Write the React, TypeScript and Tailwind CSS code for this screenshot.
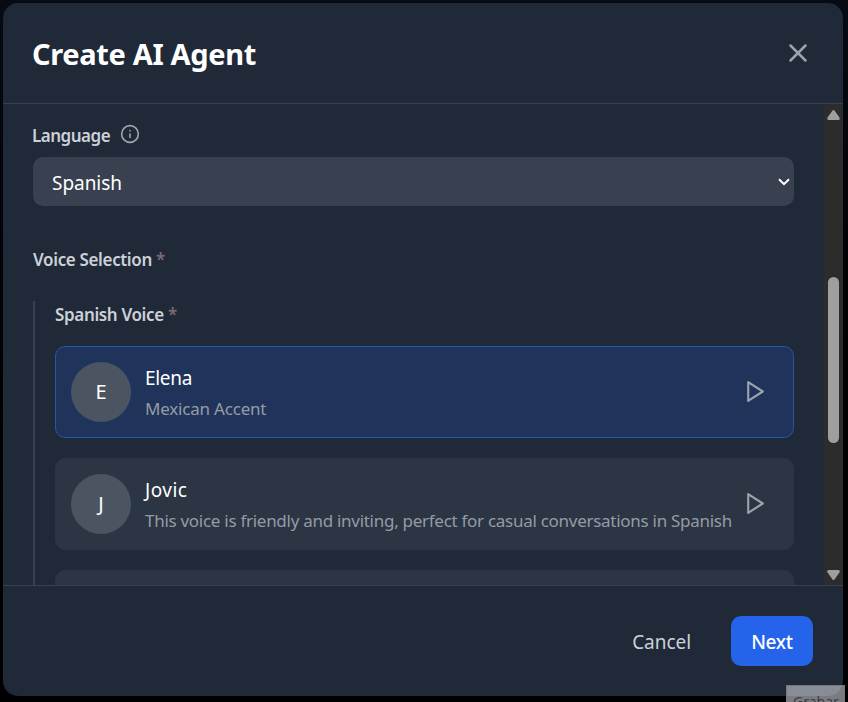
import { Info, X } from "lucide-react";

type Voice = { name: string; description: string; selected?: boolean; nameClass: string; descriptionClass: string };

const voices: Voice[] = [
  {
    name: "Elena",
    description: "Mexican Accent",
    selected: true,
    nameClass: "tracking-[-0.3px]",
    descriptionClass: "tracking-[-0.2px]",
  },
  {
    name: "Jovic",
    description: "This voice is friendly and inviting, perfect for casual conversations in Spanish",
    nameClass: "tracking-[0.5px]",
    descriptionClass: "tracking-[-0.28px]",
  },
  { name: "", description: "", nameClass: "", descriptionClass: "" },
];

function VoiceCard({ voice }: { voice: Voice }) {
  return (
    <div
      className={
        voice.selected
          ? "flex h-[92px] shrink-0 items-center rounded-[10px] border border-[#2754a6] bg-[#20345b] px-[15px]"
          : "flex h-[92px] shrink-0 items-center rounded-[10px] border border-transparent bg-[#2c3543] bg-clip-border px-[15px]"
      }
    >
      {voice.name && (
        <>
          <div className="flex size-[60px] shrink-0 items-center justify-center rounded-full bg-[#4b5561] text-[20px] text-white">
            {voice.name[0]}
          </div>
          <div className="ml-[14px] flex-1 whitespace-nowrap">
            <div className={`h-[30px] text-[19px] leading-[32px] text-white ${voice.nameClass}`}>{voice.name}</div>
            <div className={`h-[30px] text-[17px] leading-[33px] text-[#959ba6] ${voice.descriptionClass}`}>
              {voice.description}
            </div>
          </div>
          <button className="mr-[10px] mb-[2px] shrink-0 text-[#9ca3af]">
            <svg
              width="25"
              height="25"
              viewBox="0 0 24 24"
              fill="none"
              stroke="currentColor"
              strokeWidth="2"
              strokeLinecap="round"
              strokeLinejoin="round"
            >
              <path d="M5 3L19 12L5 21Z" />
            </svg>
          </button>
        </>
      )}
    </div>
  );
}

function Scrollbar() {
  return (
    <div className="flex w-[19px] shrink-0 flex-col items-center bg-[#2c2c2c] pt-[6px] pb-[5px]">
      <svg width="13" height="10" viewBox="0 0 13 10" fill="#9f9f9f">
        <path d="M5.5 0.6Q6.5-0.4 7.5 0.6L12.6 7.8Q13 10 11.5 10H1.5Q0 10 0.4 7.8Z" />
      </svg>
      <div className="mt-[157px] h-[166px] w-[11px] rounded-full bg-[#9f9f9f]" />
      <svg className="mt-auto" width="13" height="10" viewBox="0 0 13 10" fill="#9f9f9f">
        <path d="M5.5 9.4Q6.5 10.4 7.5 9.4L12.6 2.2Q13 0 11.5 0H1.5Q0 0 0.4 2.2Z" />
      </svg>
    </div>
  );
}

export default function App() {
  return (
    <div className="relative h-[702px] w-[848px] overflow-hidden bg-linear-to-b from-[#070b13] to-black p-[3px] font-['Noto_Sans',sans-serif]">
      <div className="flex h-[693px] w-[840px] flex-col overflow-hidden rounded-[15px] bg-[#202937]">
        <header className="flex h-[101px] shrink-0 items-center justify-between border-b border-[#374151] pr-[30px] pl-[29px]">
          <h1 className="mt-[1px] text-[29px] leading-[40px] font-bold tracking-[-0.35px] text-white">Create AI Agent</h1>
          <button className="text-[#9ca3af]">
            <X size={30} strokeWidth={2} />
          </button>
        </header>

        <div className="flex h-[481px] shrink-0">
          <main className="flex w-[821px] flex-col overflow-hidden pr-[30px] pl-[30px]">
            <div className="mt-[17px] flex h-[26px] shrink-0 items-center gap-[10px]">
              <label className="-ml-px mt-[4px] text-[17px] leading-[26px] font-semibold tracking-[-0.5px] text-[#ccd1d8]">
                Language
              </label>
              <Info size={20} strokeWidth={2} className="text-[#9ca3af]" />
            </div>
            <div className="mt-[10px] flex h-[49px] shrink-0 items-center justify-between rounded-[10px] bg-[#394150] pr-[4px] pl-[19px]">
              <span className="mt-[3px] text-[19px] tracking-[-0.05px] text-white">Spanish</span>
              <svg width="12" height="8" viewBox="0 0 12 8" fill="none" stroke="white" strokeWidth="2">
                <path d="M1 1.2L6 6.2L11 1.2" />
              </svg>
            </div>
            <div className="mt-[41px] h-[25px] shrink-0 text-[17px] leading-[25px] font-semibold tracking-[-0.35px] text-[#ccd1d8]">
              Voice Selection <span className="text-[#786a73]">*</span>
            </div>
            <section className="mt-[29px] flex shrink-0 flex-col gap-[20px] border-l-2 border-[#374151] pl-[20px]">
              <div className="mb-[-1px] h-[26px] text-[17px] leading-[28px] font-semibold tracking-[-0.35px] text-[#ccd1d8]">
                Spanish Voice <span className="text-[#786a73]">*</span>
              </div>
              {voices.map((voice, i) => (
                <VoiceCard key={i} voice={voice} />
              ))}
            </section>
          </main>
          <Scrollbar />
        </div>

        <footer className="flex flex-1 items-center justify-end gap-[40px] border-t border-[#374151] pr-[30px]">
          <button className="pt-[2px] text-[19px] tracking-[-0.05px] text-[#ccd1d8]">Cancel</button>
          <button className="h-[50px] w-[82px] rounded-[10px] bg-[#2563eb] pt-[2px] text-[19px] font-medium tracking-[-0.3px] text-white">
            Next
          </button>
        </footer>
      </div>
      <div className="absolute top-[685px] left-[786px] h-[30px] w-[59px] border border-[#787781] bg-[#cfcfd4]/60 pt-[5px] pl-[6px] text-[14px] leading-[22px] text-[#363b47]">
        Grabar
      </div>
    </div>
  );
}
